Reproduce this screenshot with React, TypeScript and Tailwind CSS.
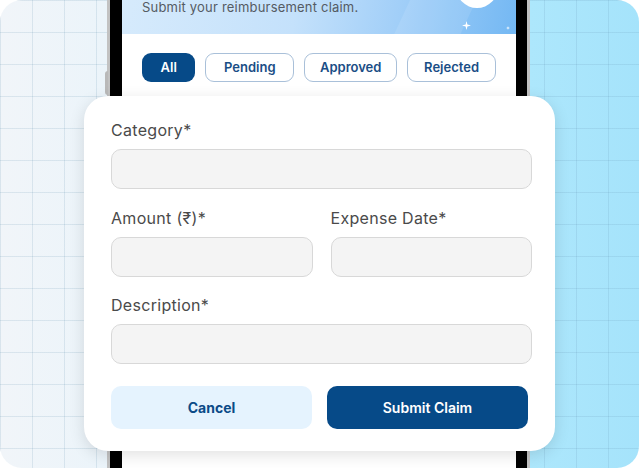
import React from 'react';

const tabs = [
  { label: 'All', w: 'w-[54px]', active: true },
  { label: 'Pending', w: 'w-[90px]' },
  { label: 'Approved', w: 'w-[94px]' },
  { label: 'Rejected', w: 'w-[90px]' },
];

function Sparkle({ size, className }: { size: number; className: string }) {
  return (
    <svg width={size} height={size} viewBox="0 0 10 10" className={className}>
      <path d="M5 0 L6 4 L10 5 L6 6 L5 10 L4 6 L0 5 L4 4 Z" fill="white" />
    </svg>
  );
}

function Field({ label, className = '' }: { label: string; className?: string }) {
  return (
    <div className={`flex flex-col gap-[7px] ${className}`}>
      <label className="text-[16px] leading-[24px] text-[#4a4a4a] tracking-[0.3px]">{label}</label>
      <div className="h-[40px] rounded-[10px] border border-[#d8d8d8] bg-[#f4f4f4]" />
    </div>
  );
}

export default function App() {
  return (
    <div className="w-[639px] h-[468px] bg-white font-['Inter',sans-serif]">
      <div className="relative w-[639px] h-[468px] overflow-hidden rounded-[22px] bg-[linear-gradient(to_right,#f1f5f9_0%,#ebf4fa_17%,#c9eefc_55%,#ade7fc_83%,#a5e3fb_100%)]">
        <div className="flex flex-col w-full h-full bg-[linear-gradient(to_right,rgba(100,145,175,0.17)_1px,transparent_1px),linear-gradient(to_bottom,rgba(100,145,175,0.17)_1px,transparent_1px)] bg-[size:32px_32px] bg-[position:0_0]">
          {/* Phone */}
          <div className="relative shrink-0 ml-[107px] mt-[-60px] w-[423px] h-[620px] rounded-[44px] border-[3px] border-[#c2c2c2] bg-black pl-[12px] pr-[11px] pt-[11px]">
            <div className="absolute -left-[5px] top-[128px] h-[24px] w-[3px] rounded-l bg-[#b9b9b9]" />
            <div className="h-full w-full overflow-hidden rounded-t-[32px] bg-white">
              {/* Header */}
              <div className="relative h-[80px] overflow-hidden bg-[linear-gradient(100deg,#d7ebfc_0%,#c4e1fb_45%,#a2cff8_70%,#74b8f3_100%)] px-[20px] pb-[18px] flex flex-col justify-end">
                <div className="absolute right-[40px] -top-[60px] h-[200px] w-[60px] rotate-[25deg] bg-white/10" />
                <div className="absolute left-[334px] top-[12px] h-[42px] w-[42px] rounded-full bg-white" />
                <Sparkle size={9} className="absolute left-[340px] top-[67px]" />
                <Sparkle size={4} className="absolute left-[384px] top-[72px]" />
                <p className="relative text-[13px] leading-[18px] text-[#555b63] tracking-[0.2px]">Submit your reimbursement claim.</p>
              </div>
              {/* Tabs */}
              <div className="mt-[19px] flex gap-[10px] px-[20px]">
                {tabs.map((t) => (
                  <button
                    key={t.label}
                    className={`${t.w} h-[29px] rounded-[9px] text-[13px] font-semibold ${
                      t.active
                        ? 'bg-[#064a88] text-white'
                        : 'border border-[#a9c0d9] bg-white text-[#1a4e86]'
                    }`}
                  >
                    {t.label}
                  </button>
                ))}
              </div>
            </div>
          </div>
        </div>

        {/* Modal card */}
        <div className="absolute left-[84px] top-[96px] w-[471px] h-[355px] rounded-[24px] bg-white pl-[27px] pr-[23px] pt-[22px] shadow-[0_4px_16px_rgba(0,0,0,0.12)]">
          <Field label="Category*" />
          <div className="mt-[17px] flex gap-[18px]">
            <Field label="Amount (₹)*" className="flex-1" />
            <Field label="Expense Date*" className="flex-1" />
          </div>
          <Field label="Description*" className="mt-[16px]" />
          <div className="mt-[22px] flex gap-[15px]">
            <button className="h-[43px] w-[201px] rounded-[10px] bg-[#e5f3fe] text-[14px] font-bold text-[#0b4a87]">
              Cancel
            </button>
            <button className="h-[43px] w-[201px] rounded-[10px] bg-[#064a88] text-[14px] font-semibold text-white">
              Submit Claim
            </button>
          </div>
        </div>
      </div>
    </div>
  );
}
